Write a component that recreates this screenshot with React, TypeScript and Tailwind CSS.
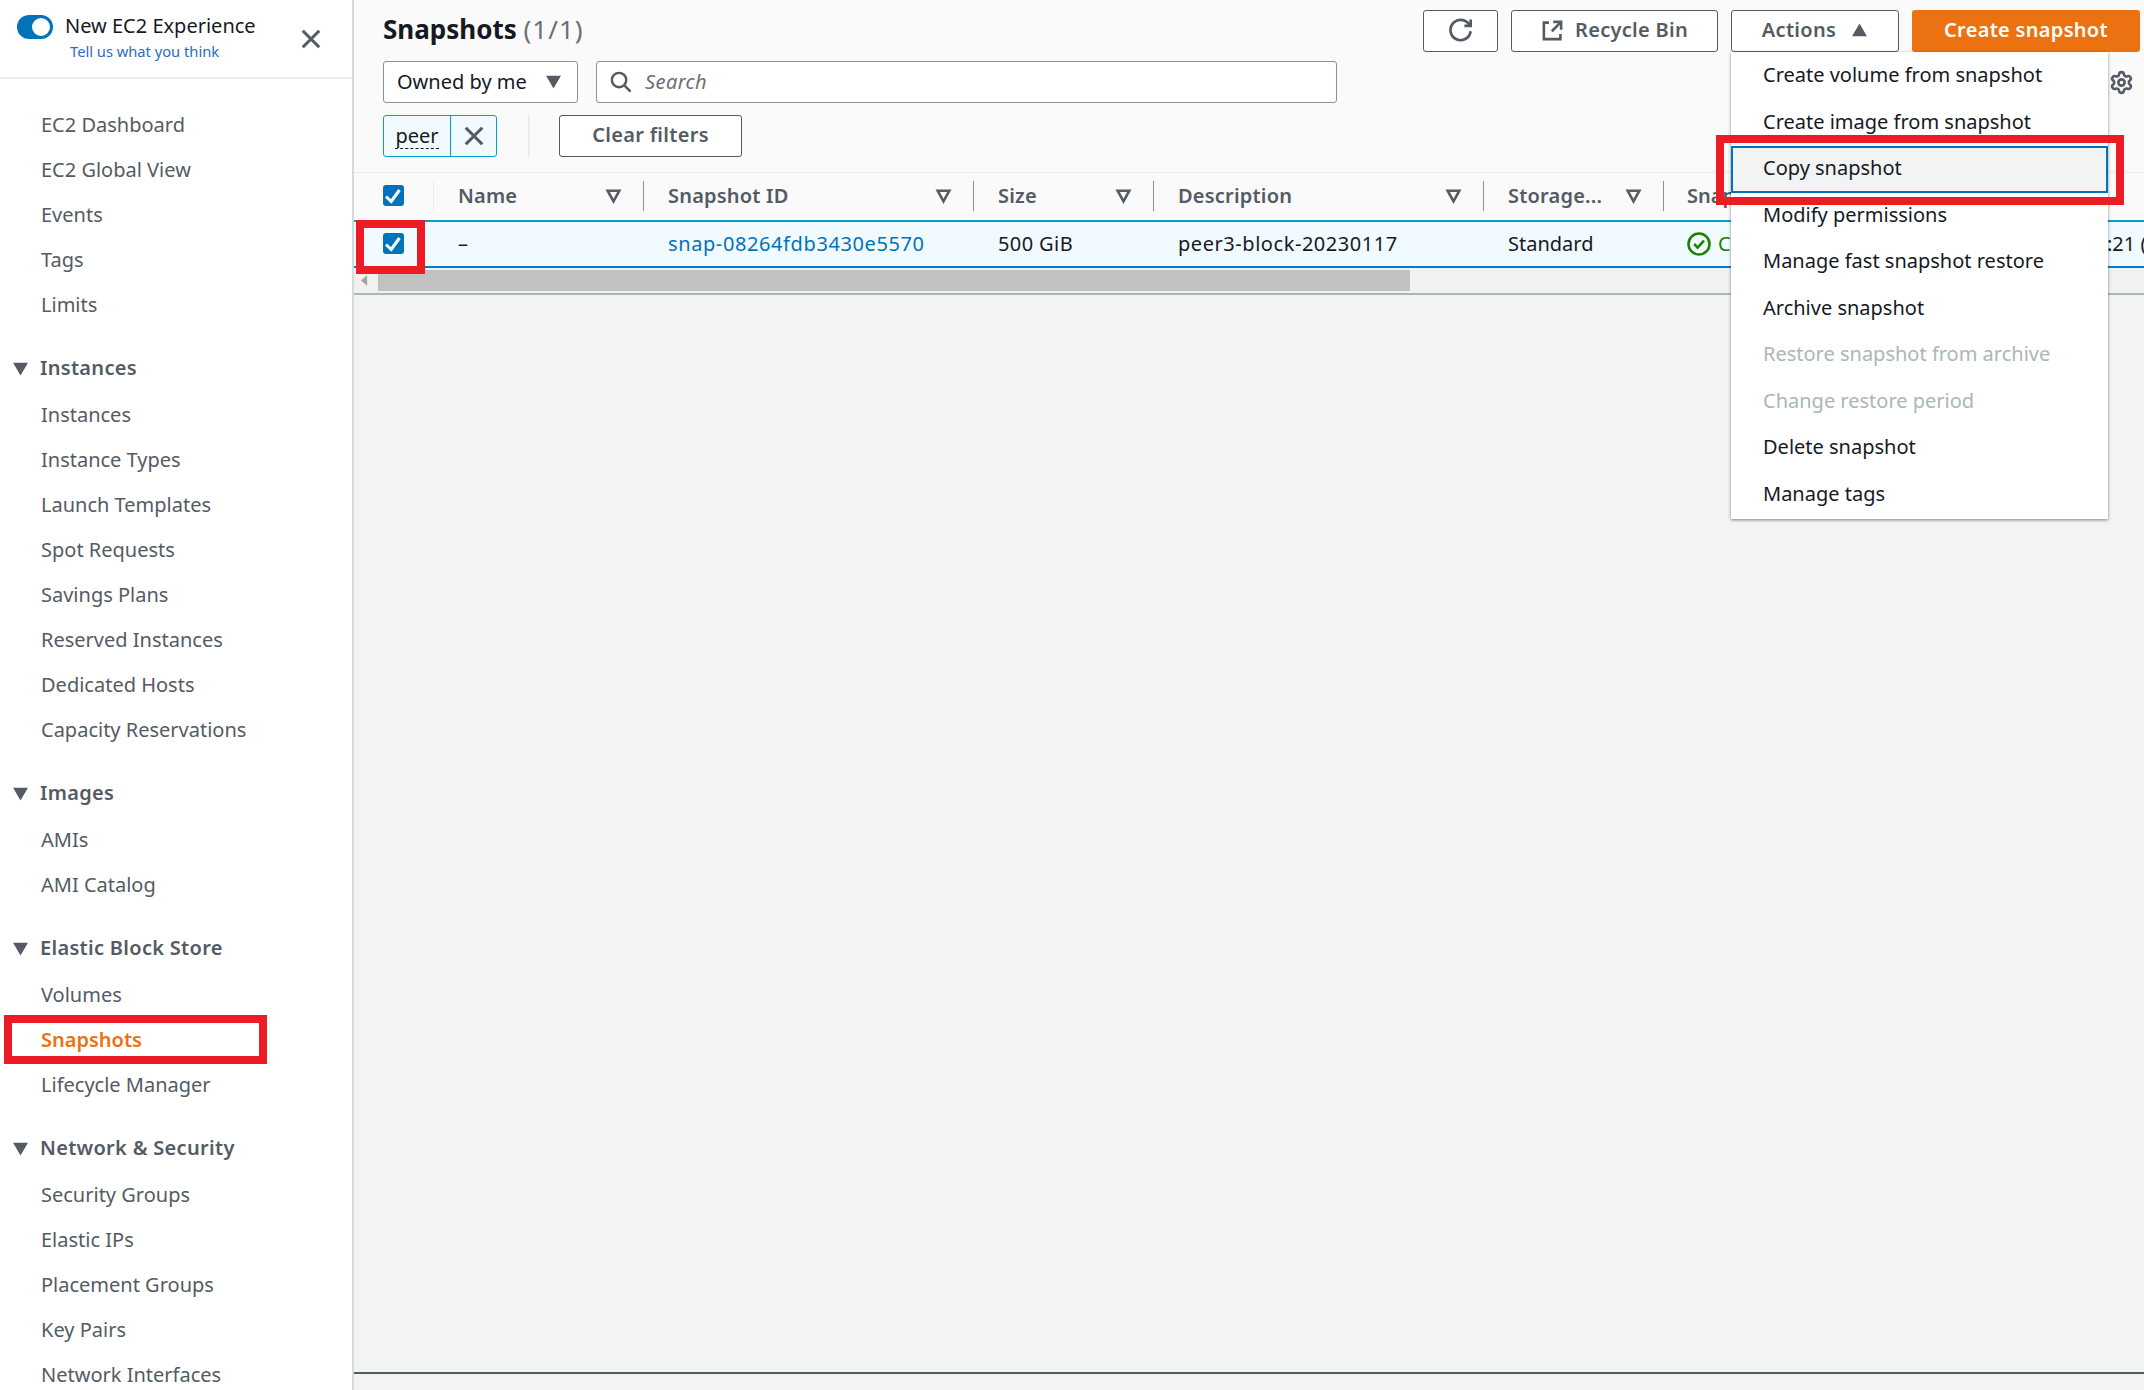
import { ReactNode } from "react";
import { Settings } from "lucide-react";

const sections = [
    { title: "Instances", items: ["Instances", "Instance Types", "Launch Templates", "Spot Requests", "Savings Plans", "Reserved Instances", "Dedicated Hosts", "Capacity Reservations"] },
    { title: "Images", items: ["AMIs", "AMI Catalog"] },
    { title: "Elastic Block Store", items: ["Volumes", "Snapshots", "Lifecycle Manager"] },
    { title: "Network & Security", items: ["Security Groups", "Elastic IPs", "Placement Groups", "Key Pairs", "Network Interfaces"] },
];

const menuItems = [
    { label: "Create volume from snapshot" },
    { label: "Create image from snapshot" },
    { label: "Copy snapshot", focused: true },
    { label: "Modify permissions" },
    { label: "Manage fast snapshot restore" },
    { label: "Archive snapshot" },
    { label: "Restore snapshot from archive", disabled: true },
    { label: "Change restore period", disabled: true },
    { label: "Delete snapshot" },
    { label: "Manage tags" },
];

function CloseIcon({ className }: { className: string }) {
    return (
        <svg viewBox="0 0 16 16" className={className} fill="none" stroke="currentColor" strokeWidth="2.3">
            <path d="M2 2l12 12M14 2L2 14" />
        </svg>
    );
}

function Caret({ className }: { className: string }) {
    return (
        <svg viewBox="0 0 16 16" className={className} fill="currentColor">
            <path d="M1 2.5h14L8 14.5z" />
        </svg>
    );
}

function Checkbox() {
    return (
        <span className="block h-[21px] w-[21px] rounded-[3px] bg-[#0073bb]">
            <svg viewBox="0 0 21 21" className="h-[21px] w-[21px]" fill="none" stroke="#ffffff" strokeWidth="3">
                <path d="M3 11.5l5.2 5L16.5 5" />
            </svg>
        </span>
    );
}

function HeaderCell({ label, width, pad = "pl-[24px]" }: { label: string; width: string; pad?: string }) {
    return (
        <div className={`flex h-full shrink-0 items-center justify-between ${width} ${pad}`}>
            <span className="whitespace-nowrap text-[20px] font-semibold tracking-[0.2px] text-[#545b64]">{label}</span>
            <span className="flex items-center">
                <svg viewBox="0 0 16 16" className="mr-[21px] h-[17px] w-[17px] text-[#545b64]" fill="none" stroke="currentColor" strokeWidth="2.4">
                    <path d="M2.5 3.5h11L8 13.5z" />
                </svg>
                <span className="h-[30px] w-px bg-[#879596]" />
            </span>
        </div>
    );
}

function ToolButton({ children, className }: { children: ReactNode; className: string }) {
    return (
        <button className={`flex h-[42px] items-center justify-center rounded-[3px] border border-[#545b64] bg-white pb-[2px] text-[20px] font-semibold tracking-[0.3px] text-[#545b64] ${className}`}>
            {children}
        </button>
    );
}

function Sidebar() {
    return (
        <aside className="h-full w-[354px] shrink-0 overflow-hidden border-r-2 border-[#d5dbdb] bg-white text-[20px] text-[#545b64]">
            <div className="relative h-[79px] border-b-2 border-[#eaeded]">
                <div className="flex items-start pl-[17px] pt-[15px]">
                    <span className="flex h-[24px] w-[36px] items-center justify-end rounded-full bg-[#0073bb] pr-[3px]">
                        <span className="h-[18px] w-[18px] rounded-full bg-white" />
                    </span>
                    <div className="ml-[12px] -mt-[2px]">
                        <div className="text-[20px] leading-[26px] text-[#16191f]">New EC2 Experience</div>
                        <div className="ml-[5px] mt-[2px] text-[14.7px] leading-[20px] text-[#2b6cc4]">Tell us what you think</div>
                    </div>
                    <CloseIcon className="ml-[44px] mt-[13px] h-[22px] w-[22px] text-[#545b64]" />
                </div>
            </div>
            <nav className="pt-[23px]">
                {["EC2 Dashboard", "EC2 Global View", "Events", "Tags", "Limits"].map((item) => (
                    <div key={item} className="flex h-[45px] items-center pl-[41px]">{item}</div>
                ))}
                {sections.map((section) => (
                    <div key={section.title} className="mt-[18px]">
                        <div className="mb-[1px] flex h-[46px] items-center pl-[12px] font-semibold tracking-[0.3px]">
                            <Caret className="mr-[11px] h-[17px] w-[17px]" />
                            {section.title}
                        </div>
                        {section.items.map((item) =>
                            item === "Snapshots" ? (
                                <div key={item} className="flex h-[45px] items-center pl-[41px] font-semibold text-[#ec7211]">{item}</div>
                            ) : (
                                <div key={item} className="flex h-[45px] items-center pl-[41px]">{item}</div>
                            )
                        )}
                    </div>
                ))}
            </nav>
        </aside>
    );
}

function SnapshotsPanel() {
    return (
        <section className="h-[295px] border-b-2 border-[#aab7b8] bg-[#fafafa]">
            <div className="flex h-[61px] items-start pl-[29px]">
                <h1 className="mt-[11px] text-[26px] font-bold leading-[36px] text-[#16191f]">
                    Snapshots <span className="font-normal tracking-[1px] text-[#687078]">(1/1)</span>
                </h1>
                <div className="ml-auto mt-[10px] mr-[4px] flex gap-[13px]">
                    <ToolButton className="w-[75px]">
                        <svg viewBox="0 0 16 16" className="h-[25px] w-[25px]" fill="none" stroke="currentColor" strokeWidth="1.7">
                            <path d="M10.5 5h4V1" />
                            <path d="M14.5 8.5a6.5 6.5 0 1 1-.4-3.2" />
                        </svg>
                    </ToolButton>
                    <ToolButton className="w-[207px]">
                        <svg viewBox="0 0 16 16" className="mr-[11px] h-[23px] w-[23px]" fill="none" stroke="currentColor" strokeWidth="1.8">
                            <path d="M14 7.5V2H8.5" />
                            <path d="M14 2L7.5 8.5" />
                            <path d="M5.5 2.5H2V14h11.5v-3.5" />
                        </svg>
                        Recycle Bin
                    </ToolButton>
                    <ToolButton className="w-[168px]">
                        Actions
                        <Caret className="ml-[15px] h-[17px] w-[17px] rotate-180" />
                    </ToolButton>
                    <button className="flex h-[42px] w-[228px] items-center justify-center rounded-[3px] bg-[#ec7211] pb-[2px] text-[20px] font-semibold tracking-[0.3px] text-white">
                        Create snapshot
                    </button>
                </div>
            </div>
            <div className="flex gap-[18px] pl-[29px]">
                <div className="flex h-[42px] w-[195px] items-center justify-between rounded-[3px] border border-[#879596] bg-white pb-[1px] pl-[13px] pr-[15px] text-[20px] text-[#16191f]">
                    Owned by me
                    <Caret className="h-[17px] w-[17px] text-[#545b64]" />
                </div>
                <div className="flex h-[42px] w-[741px] items-center rounded-[3px] border border-[#879596] bg-white pb-[1px] pl-[12px] text-[20px] italic tracking-[0.4px] text-[#687078]">
                    <svg viewBox="0 0 16 16" className="mr-[13px] h-[23px] w-[23px] text-[#545b64]" fill="none" stroke="currentColor" strokeWidth="1.7">
                        <circle cx="7" cy="7" r="5" />
                        <path d="M10.5 10.5L15 15" />
                    </svg>
                    Search
                </div>
            </div>
            <div className="mt-[12px] flex items-stretch pl-[29px]">
                <div className="flex h-[42px] w-[114px] items-center rounded-[3px] border border-[#00a1c9] bg-[#f1faff]">
                    <span className="flex h-full w-[67px] items-center justify-center border-r border-[#00a1c9] text-[20px] text-[#16191f]">
                        <span className="border-b border-dashed border-[#16191f] leading-[25px]">peer</span>
                    </span>
                    <span className="flex flex-1 items-center justify-center">
                        <CloseIcon className="h-[22px] w-[22px] text-[#545b64]" />
                    </span>
                </div>
                <span className="ml-[31px] w-[2px] bg-[#eaeded]" />
                <button className="ml-[29px] flex h-[42px] w-[183px] items-center justify-center rounded-[3px] border border-[#545b64] bg-white pb-[2px] text-[20px] font-semibold tracking-[0.3px] text-[#545b64]">
                    Clear filters
                </button>
            </div>
            <div className="mt-[15px] flex h-[48px] items-center overflow-hidden border-t border-[#eaeded] pb-[2px]">
                <div className="flex h-full w-[80px] shrink-0 items-center justify-between pl-[29px]">
                    <Checkbox />
                    <span className="h-[30px] w-px bg-[#eaeded]" />
                </div>
                <HeaderCell label="Name" width="w-[210px]" />
                <HeaderCell label="Snapshot ID" width="w-[330px]" />
                <HeaderCell label="Size" width="w-[180px]" />
                <HeaderCell label="Description" width="w-[330px]" />
                <HeaderCell label="Storage..." width="w-[180px]" />
                <div className="pl-[23px] text-[20px] font-semibold text-[#545b64]">Snapshot status</div>
            </div>
            <div className="flex h-[48px] items-center overflow-hidden whitespace-nowrap border-t-2 border-b-2 border-t-[#00a1c9] border-b-[#0a7bc0] bg-[#f1faff] pb-[1px] text-[20px] text-[#16191f]">
                <div className="w-[104px] shrink-0 pl-[29px]"><Checkbox /></div>
                <div className="w-[210px] shrink-0">–</div>
                <div className="w-[330px] shrink-0 tracking-[0.6px] text-[#0073bb]">snap-08264fdb3430e5570</div>
                <div className="w-[180px] shrink-0 tracking-[0.4px]">500 GiB</div>
                <div className="w-[330px] shrink-0 tracking-[0.55px]">peer3-block-20230117</div>
                <div className="w-[179px] shrink-0">Standard</div>
                <div className="flex w-[420px] shrink-0 items-center text-[#1d8102]">
                    <svg viewBox="0 0 16 16" className="mr-[7px] h-[24px] w-[24px]" fill="none" stroke="currentColor" strokeWidth="1.7">
                        <circle cx="8" cy="8" r="7" />
                        <path d="M4.8 8l2.3 2.4 4.2-4.6" />
                    </svg>
                    Completed
                </div>
                <div>:21 (</div>
            </div>
            <div className="flex h-[25px] items-start bg-[#f1f1f1] pt-[2px]">
                <svg viewBox="0 0 8 12" className="ml-[7px] mt-[5px] h-[11px] w-[7px] text-[#a3a3a3]" fill="currentColor">
                    <path d="M7 0v12L0 6z" />
                </svg>
                <div className="ml-[10px] h-[21px] w-[1032px] bg-[#c1c1c1]" />
            </div>
        </section>
    );
}

function ActionsMenu() {
    return (
        <div className="absolute left-[1377px] top-[52px] w-[377px] bg-white py-[1px] text-[20px] text-[#16191f] shadow-[0_1px_3px_rgba(0,28,36,0.5)]">
            {menuItems.map((item) => (
                <div
                    key={item.label}
                    className={
                        item.focused
                            ? "flex h-[46.5px] items-center border-2 border-[#0073bb] bg-[#f2f3f3] pb-[2px] pl-[30px]"
                            : item.disabled
                              ? "flex h-[46.5px] items-center pb-[2px] pl-[32px] text-[#aab7b8]"
                              : "flex h-[46.5px] items-center pb-[2px] pl-[32px]"
                    }
                >
                    {item.label}
                </div>
            ))}
        </div>
    );
}

export default function App() {
    return (
        <div className="relative flex h-[1390px] w-[2144px] overflow-hidden bg-[#f2f3f3] font-['Noto_Sans',sans-serif]">
            <Sidebar />
            <main className="relative min-w-0 flex-1">
                <SnapshotsPanel />
                <div className="h-[1077px]" />
                <div className="h-[2px] bg-[#545b64]" />
                <Settings className="absolute left-[1755px] top-[70px] h-[25px] w-[25px] text-[#545b64]" strokeWidth={2.5} />
                <ActionsMenu />
            </main>
            {/* annotation boxes drawn over the screenshot */}
            <div className="absolute left-[4px] top-[1015px] h-[49px] w-[263px] border-[8px] border-[#ed1c24]" />
            <div className="absolute left-[356px] top-[220px] h-[54px] w-[69px] border-[8px] border-[#ed1c24]" />
            <div className="absolute left-[1716px] top-[135px] h-[70px] w-[408px] border-[8px] border-[#ed1c24]" />
        </div>
    );
}
